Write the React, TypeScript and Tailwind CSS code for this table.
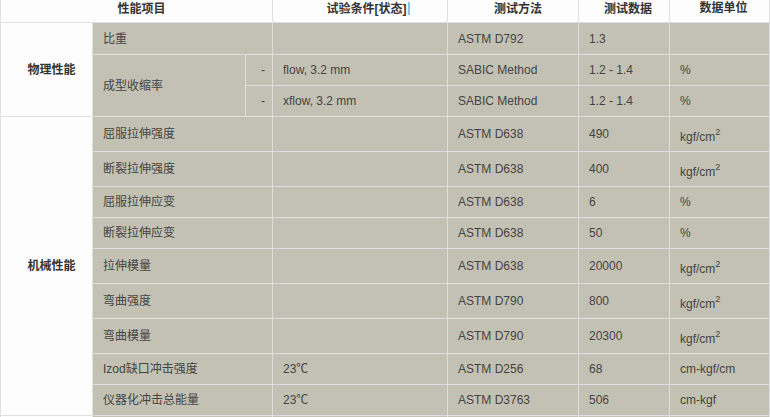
import React from "react";

const font = { fontFamily: "'Liberation Sans', 'Noto Sans CJK SC', sans-serif" };

type Row = { label: string; cond: string; method: string; value: string; unit: React.ReactNode };

const cm2 = (
  <span>
    kgf/cm<sup className="text-[9px] relative -top-[1px] align-super leading-none">2</sup>
  </span>
);

const mech: Row[] = [
  { label: "屈服拉伸强度", cond: "", method: "ASTM D638", value: "490", unit: cm2 },
  { label: "断裂拉伸强度", cond: "", method: "ASTM D638", value: "400", unit: cm2 },
  { label: "屈服拉伸应变", cond: "", method: "ASTM D638", value: "6", unit: "%" },
  { label: "断裂拉伸应变", cond: "", method: "ASTM D638", value: "50", unit: "%" },
  { label: "拉伸模量", cond: "", method: "ASTM D638", value: "20000", unit: cm2 },
  { label: "弯曲强度", cond: "", method: "ASTM D790", value: "800", unit: cm2 },
  { label: "弯曲模量", cond: "", method: "ASTM D790", value: "20300", unit: cm2 },
  { label: "Izod缺口冲击强度", cond: "23℃", method: "ASTM D256", value: "68", unit: "cm-kgf/cm" },
  { label: "仪器化冲击总能量", cond: "23℃", method: "ASTM D3763", value: "506", unit: "cm-kgf" },
];

const G = "bg-[#c3c1b3] flex items-center pl-[10px] text-[12px] text-[#444] whitespace-nowrap";
const W = "bg-[#fdfdfd] flex items-center justify-center pl-[10px] text-[12px] font-bold text-[#333] whitespace-nowrap";
const H = "bg-[#fdfdfd] flex items-start justify-center pt-[1px] text-[12px] leading-[16px] font-bold text-[#333] whitespace-nowrap";

export default function App() {
  return (
    <div className="w-[770px] h-[417px] overflow-hidden bg-white" style={font}>
      <div className="grid w-[770px] gap-px bg-[#e0e0e0] px-px grid-cols-[91px_152px_26px_174px_130px_90px_99px] grid-rows-[22px_31px_30px_30px_34px_34px_30px_30px_34px_34px_34px_30px_30px_30px]">
        {/* header */}
        <div className={`${H} col-span-3 pl-[10px]`}>性能项目</div>
        <div className={`${H} pl-[16px]`}>
          试验条件[状态]
          <span className="ml-px mt-[1px] inline-block h-[13px] w-[2px] bg-[#8cc4ec]" />
        </div>
        <div className={`${H} pl-[10px]`}>测试方法</div>
        <div className={`${H} pl-[8px]`}>测试数据</div>
        <div className={`${H} pl-[8px] -mt-px`}>数据单位</div>

        {/* 物理性能 */}
        <div className={`${W} row-span-3`}>物理性能</div>
        <div className={`${G} col-span-2`}>比重</div>
        <div className={G}></div>
        <div className={G}>ASTM D792</div>
        <div className={G}>1.3</div>
        <div className={G}></div>

        <div className={`${G} row-span-2`}>成型收缩率</div>
        <div className={`${G} justify-center pl-0 pr-[2px]`}>-</div>
        <div className={G}>flow, 3.2 mm</div>
        <div className={G}>SABIC Method</div>
        <div className={G}>1.2 - 1.4</div>
        <div className={G}>%</div>

        <div className={`${G} justify-center pl-0 pr-[2px]`}>-</div>
        <div className={G}>xflow, 3.2 mm</div>
        <div className={G}>SABIC Method</div>
        <div className={G}>1.2 - 1.4</div>
        <div className={G}>%</div>

        {/* 机械性能 */}
        <div className={`${W} row-span-9`}>机械性能</div>
        {mech.map((r, i) => (
          <React.Fragment key={i}>
            <div className={`${G} col-span-2`}>{r.label}</div>
            <div className={G}>{r.cond}</div>
            <div className={G}>{r.method}</div>
            <div className={G}>{r.value}</div>
            <div className={`${G} ${typeof r.unit === "string" ? "" : "pt-[5px]"}`}>{r.unit}</div>
          </React.Fragment>
        ))}

        {/* next group (cut off) */}
        <div className="bg-[#fdfdfd]"></div>
        <div className={`${G} col-span-2`}></div>
        <div className={G}></div>
        <div className={G}></div>
        <div className={G}></div>
        <div className={G}></div>
      </div>
    </div>
  );
}
